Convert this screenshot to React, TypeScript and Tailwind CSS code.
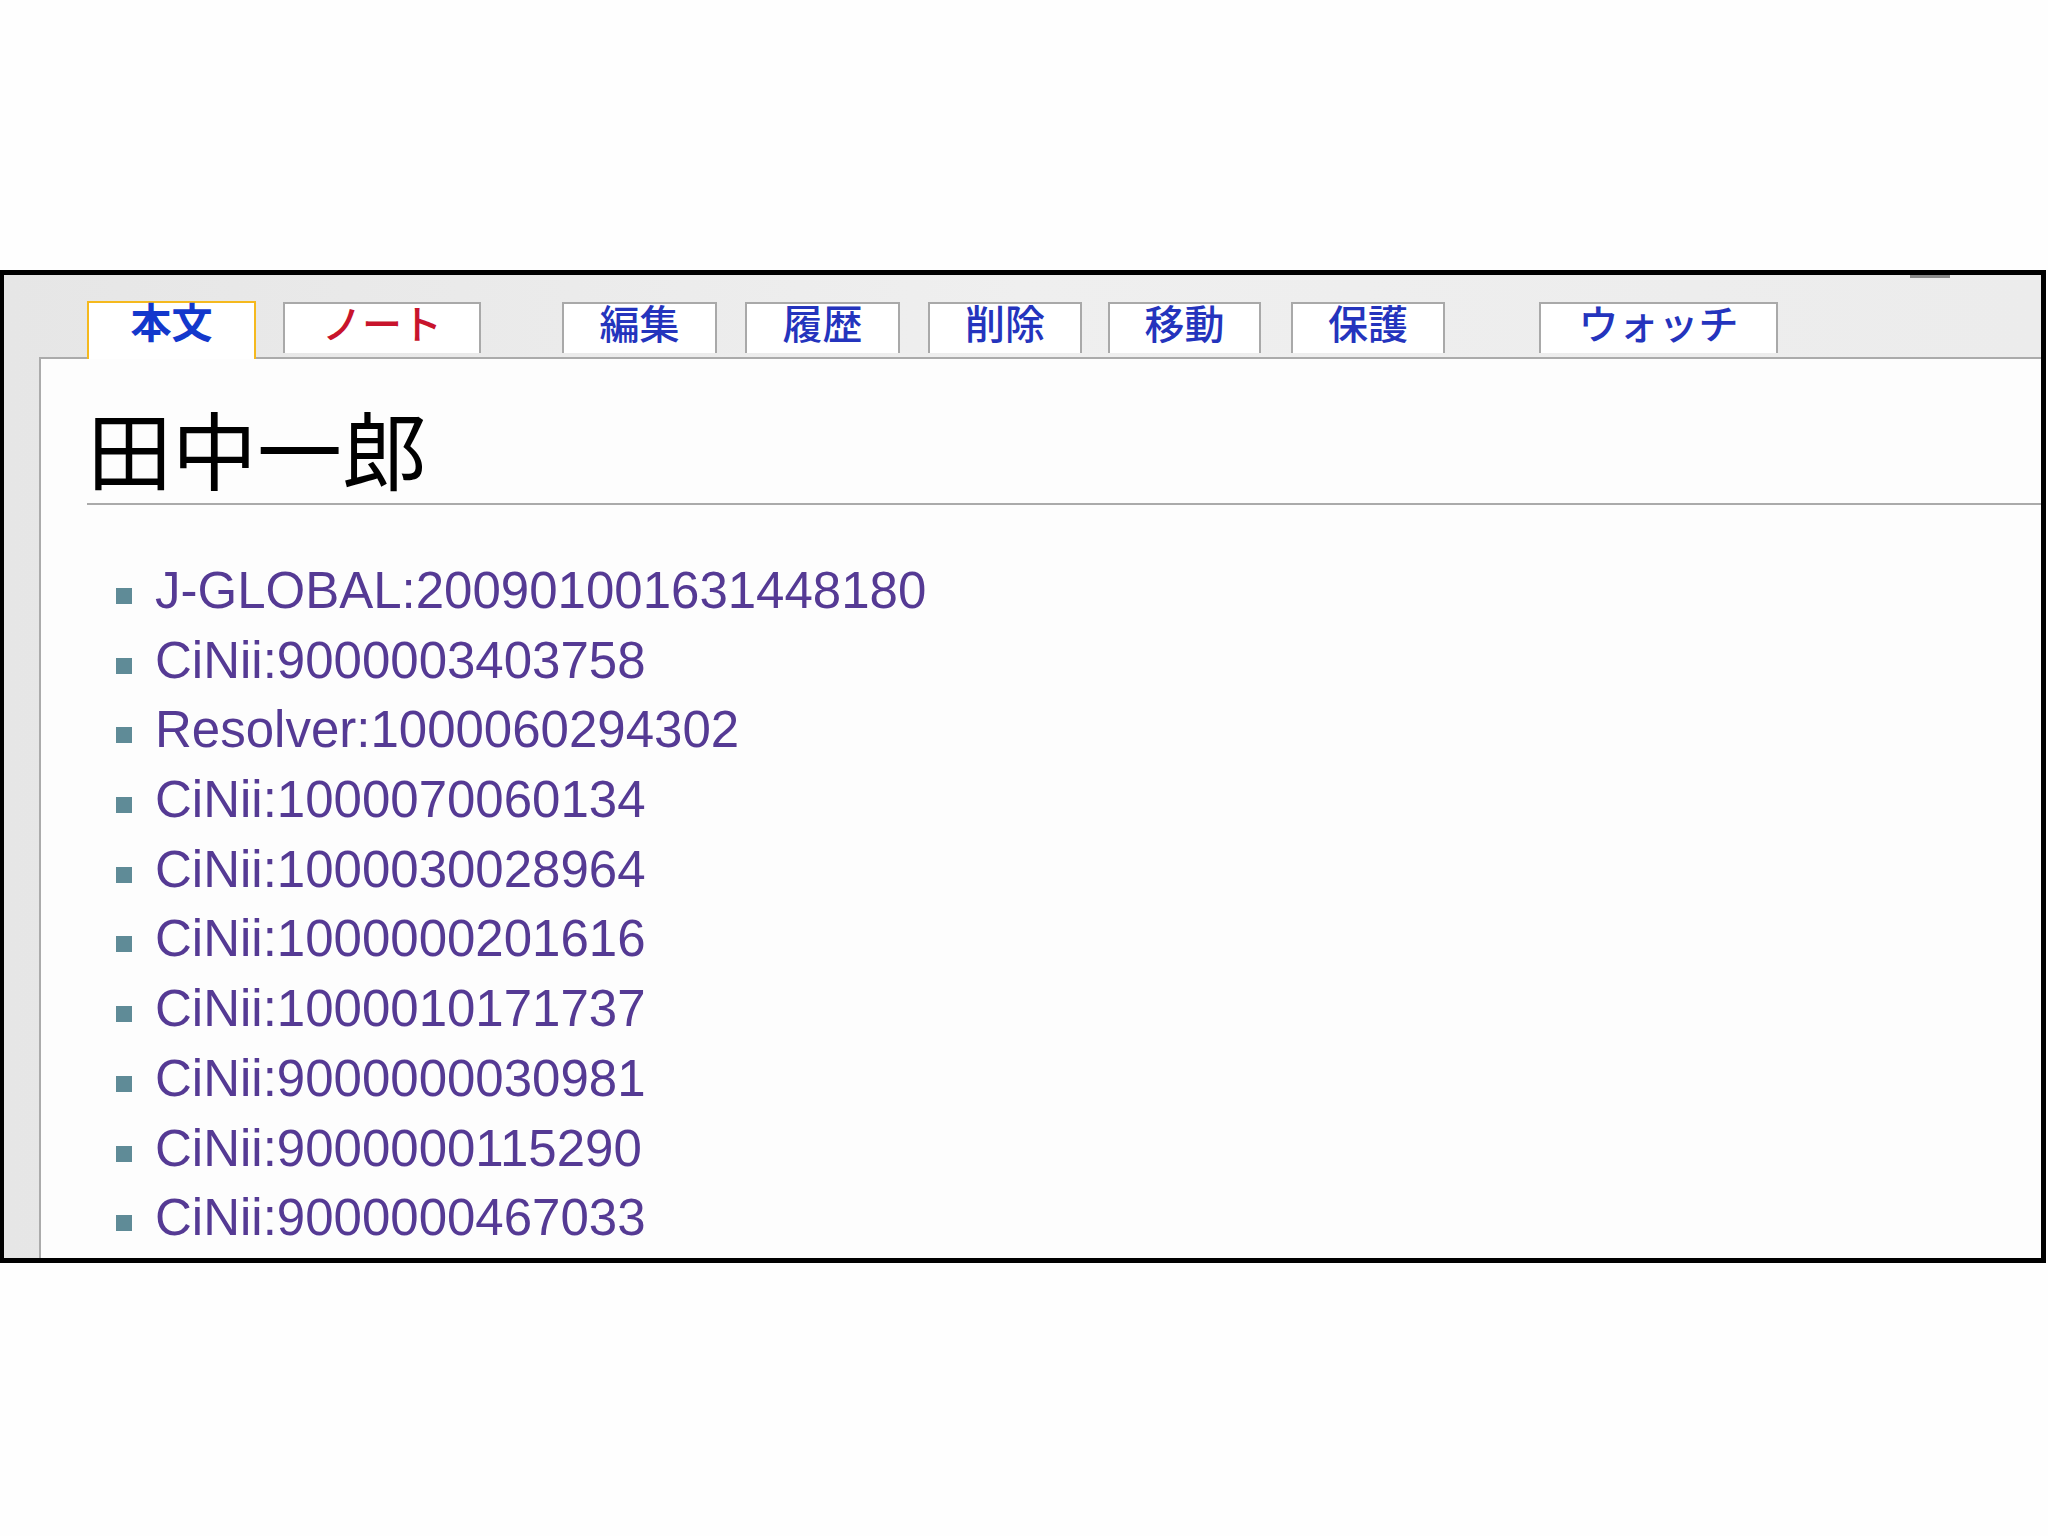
import React from "react";

type Tab = {
  label: string;
  className: string;
  active?: boolean;
  red?: boolean;
};

const tabs: Tab[] = [
  { label: "本文", className: "w-[169px]", active: true },
  { label: "ノート", className: "ml-[27px] w-[198px]", red: true },
  { label: "編集", className: "ml-[81px] w-[155px]" },
  { label: "履歴", className: "ml-[28px] w-[155px]" },
  { label: "削除", className: "ml-[28px] w-[154px]" },
  { label: "移動", className: "ml-[26px] w-[153px]" },
  { label: "保護", className: "ml-[30px] w-[154px]" },
  { label: "ウォッチ", className: "ml-[94px] w-[239px]" },
];

const links = [
  "J-GLOBAL:200901001631448180",
  "CiNii:9000003403758",
  "Resolver:1000060294302",
  "CiNii:1000070060134",
  "CiNii:1000030028964",
  "CiNii:1000000201616",
  "CiNii:1000010171737",
  "CiNii:9000000030981",
  "CiNii:9000000115290",
  "CiNii:9000000467033",
];

const cjk = "font-['Noto_Sans_CJK_JP','Noto_Sans',sans-serif]";

export default function App() {
  return (
    <div className="w-[2048px] h-[1536px] bg-[#fefefe] overflow-hidden">
      <div className="h-[270px]" />

      {/* 枠 */}
      <div className="relative w-[2046px] h-[993px] border-[5px] border-l-[4px] border-black bg-gradient-to-r from-[#e6e6e6] via-[#efefef] to-[#ececec] flex flex-col overflow-hidden">
        <div className="absolute top-0 left-[1906px] w-[40px] h-[3px] bg-[#8a8a8a]" />

        {/* タブ */}
        <div className="relative z-10 flex items-start pt-[26px] pl-[83px] -mb-[2px]">
          {tabs.map((t) =>
            t.active ? (
              <div
                key={t.label}
                className={`${t.className} h-[58px] bg-white border-2 border-b-0 border-[#f5b91e] flex items-center justify-center pb-[21px]`}
              >
                <span className={`${cjk} text-[41px] leading-none font-bold text-[#1338cc]`}>{t.label}</span>
              </div>
            ) : (
              <div
                key={t.label}
                className={`${t.className} mt-px h-[51px] bg-white border-2 border-b-0 border-[#a9a9a9] flex items-center justify-center pb-[13px]`}
              >
                <span
                  className={`${cjk} text-[40px] leading-none font-medium ${t.red ? "text-[#c8142c]" : "text-[#2434bd]"}`}
                >
                  {t.label}
                </span>
              </div>
            )
          )}
        </div>

        {/* 本文 */}
        <div className="flex-1 ml-[35px] bg-[#fdfdfd] border-t-2 border-l-2 border-[#ababab]">
          <h1
            className={`${cjk} mt-[45px] ml-[46px] pb-[14px] border-b-2 border-[#aaaaaa] text-[85px] leading-none font-normal text-black`}
          >
            田中一郎
          </h1>

          <ul className="mt-[51px] pl-[75px]">
            {links.map((l) => (
              <li key={l} className="flex items-start h-[69.7px]">
                <span className="mt-[32px] w-[16px] h-[16px] bg-[#5f8b97] shrink-0" />
                <a className="ml-[23px] font-['Liberation_Sans',Arial,sans-serif] text-[51px] leading-[69.7px] text-[#553a94] whitespace-nowrap">
                  {l}
                </a>
              </li>
            ))}
          </ul>
        </div>
      </div>
    </div>
  );
}
